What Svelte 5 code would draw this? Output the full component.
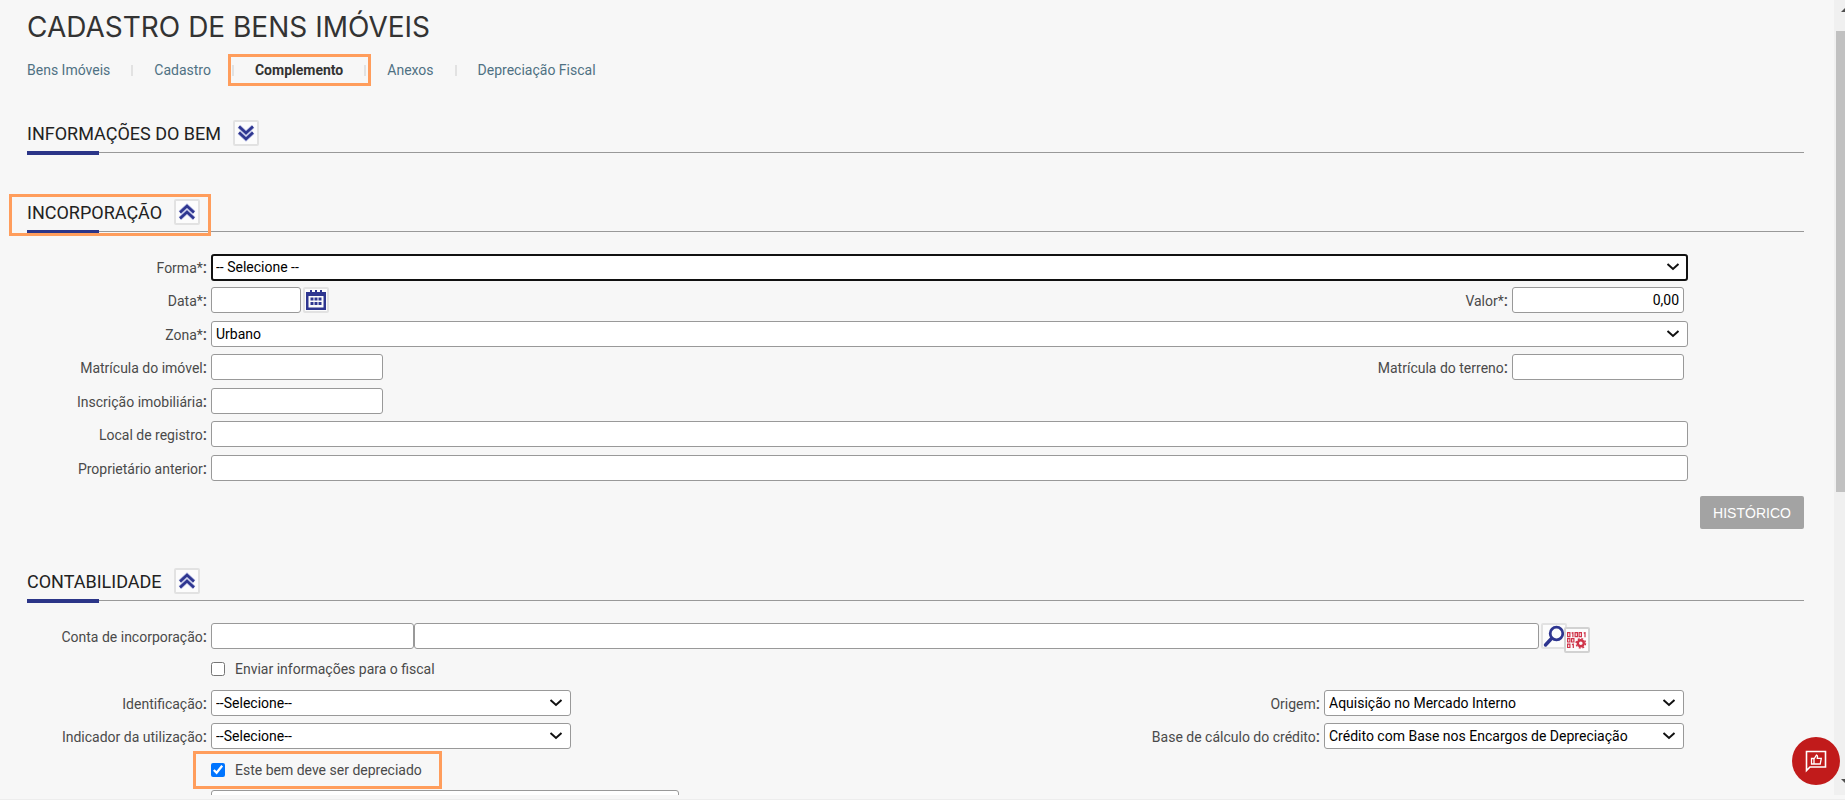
<script>
    const tabs = ["Bens Imóveis", "Cadastro", "Complemento", "Anexos", "Depreciação Fiscal"];
    const activeTab = "Complemento";

    let enviarFiscal = false;
    let depreciar = true;
    let valor = "0,00";
</script>

{#snippet chevrons(up)}
    <svg viewBox="0 0 24 24" width="24" height="24" class:up aria-hidden="true">
        <path d="M5 5.500 L12 12 L19 5.500 M5 11.500 L12 18 L19 11.500" fill="none" stroke="#b4b9e2" stroke-width="4.200" />
        <path d="M5 5.500 L12 12 L19 5.500 M5 11.500 L12 18 L19 11.500" fill="none" stroke="#2e3690" stroke-width="2.500" />
    </svg>
{/snippet}

{#snippet heading(title, up)}
    <div class="heading">
        <h2>{title}</h2>
        <button class="icon" aria-label={up ? "Recolher" : "Expandir"}>{@render chevrons(up)}</button>
    </div>
{/snippet}

{#snippet label(id, text)}
    <label class="label" for={id}>{text}<b>:</b></label>
{/snippet}

<div class="page">
    <div class="body">
        <main>
            <h1>CADASTRO DE BENS IMÓVEIS</h1>
            <nav>
                {#each tabs as tab}
                    <a href="#{tab}" class:active={tab === activeTab}>{tab}</a>
                {/each}
            </nav>

            <section class="first">
                {@render heading("INFORMAÇÕES DO BEM", false)}
            </section>

            <section class="second">
                <div class="marked">
                    {@render heading("INCORPORAÇÃO", true)}
                    <span class="mark"></span>
                </div>
                <div class="form">
                    <div class="row">
                        {@render label("forma", "Forma*")}
                        <select id="forma" class="wide focused"><option>-- Selecione --</option></select>
                    </div>
                    <div class="row">
                        {@render label("data", "Data*")}
                        <input id="data" class="date" type="text" />
                        <button class="icon" aria-label="Calendário">
                            <svg viewBox="0 0 24 24" width="24" height="24" fill="#2e3690">
                                <path d="M6 2h2v3H6z M11 2h2v3h-2z M16 2h2v3h-2z" />
                                <path d="M2 4h20v18H2z M4.500 8h15v11.500h-15z" fill-rule="evenodd" />
                                <path d="M6.500 9.500h3v3h-3z M10.500 9.500h3v3h-3z M14.500 9.500h3v3h-3z M6.500 14h3v3h-3z M10.500 14h3v3h-3z M14.500 14h3v3h-3z" />
                            </svg>
                        </button>
                        <div class="right">
                            {@render label("valor", "Valor*")}
                            <input id="valor" class="short number" type="text" bind:value={valor} />
                        </div>
                    </div>
                    <div class="row">
                        {@render label("zona", "Zona*")}
                        <select id="zona" class="wide"><option>Urbano</option></select>
                    </div>
                    <div class="row">
                        {@render label("matricula", "Matrícula do imóvel")}
                        <input id="matricula" class="short" type="text" />
                        <div class="right">
                            {@render label("terreno", "Matrícula do terreno")}
                            <input id="terreno" class="short" type="text" />
                        </div>
                    </div>
                    <div class="row">
                        {@render label("inscricao", "Inscrição imobiliária")}
                        <input id="inscricao" class="short" type="text" />
                    </div>
                    <div class="row">
                        {@render label("local", "Local de registro")}
                        <input id="local" class="wide" type="text" />
                    </div>
                    <div class="row">
                        {@render label("proprietario", "Proprietário anterior")}
                        <input id="proprietario" class="wide" type="text" />
                    </div>
                </div>
                <div class="actions">
                    <button class="history">HISTÓRICO</button>
                </div>
            </section>

            <section class="third">
                {@render heading("CONTABILIDADE", true)}
                <div class="form">
                    <div class="row">
                        {@render label("conta", "Conta de incorporação")}
                        <input id="conta" class="code" type="text" />
                        <input class="account" type="text" aria-label="Descrição da conta" />
                        <div class="tools">
                            <button class="icon" aria-label="Pesquisar">
                                <svg viewBox="0 0 24 24" width="24" height="24">
                                    <circle cx="14.500" cy="9.500" r="6.300" fill="none" stroke="#2e3690" stroke-width="2.800" />
                                    <path d="M9.500 14.500 L3.500 21" stroke="#2e3690" stroke-width="3.400" stroke-linecap="round" />
                                </svg>
                            </button>
                            <button class="icon code-icon" aria-label="Configurar código">
                                <svg viewBox="0 0 24 24" width="24" height="24" fill="none" stroke="#cf3348" stroke-width="1.200">
                                    <path d="M2.600 4.600h2.300v4h-2.300z M7.900 4v5.200 M6.600 5.200l1.300-.8 M10.100 4.600h2.300v4h-2.300z M14.100 4.600h2.300v4h-2.300z M20 4v5.200 M18.700 5.200l1.300-.8" />
                                    <path d="M2.600 10.700h2.300v3.300h-2.300z M6.600 10.700h2.300v3.300h-2.300z M2.600 16.200h2.300v3.300h-2.300z M8.300 15.600v4.500 M7 16.700l1.300-.8" />
                                    <circle cx="15.800" cy="15.300" r="3" stroke-width="2.400" />
                                    <circle cx="15.800" cy="15.300" r="4.700" stroke-width="1.400" stroke-dasharray="1.900 1.790" />
                                </svg>
                            </button>
                        </div>
                    </div>
                    <div class="row check">
                        <input id="fiscal" type="checkbox" bind:checked={enviarFiscal} />
                        <label for="fiscal">Enviar informações para o fiscal</label>
                    </div>
                    <div class="row">
                        {@render label("identificacao", "Identificação")}
                        <select id="identificacao" class="medium"><option>--Selecione--</option></select>
                        <div class="right">
                            {@render label("origem", "Origem")}
                            <select id="origem" class="medium"><option>Aquisição no Mercado Interno</option></select>
                        </div>
                    </div>
                    <div class="row">
                        {@render label("indicador", "Indicador da utilização")}
                        <select id="indicador" class="medium"><option>--Selecione--</option></select>
                        <div class="right">
                            {@render label("base", "Base de cálculo do crédito")}
                            <select id="base" class="medium"><option>Crédito com Base nos Encargos de Depreciação</option></select>
                        </div>
                    </div>
                    <div class="row check">
                        <div class="marked">
                            <input id="depreciado" type="checkbox" bind:checked={depreciar} />
                            <label for="depreciado">Este bem deve ser depreciado</label>
                            <span class="mark"></span>
                        </div>
                    </div>
                    <div class="row check">
                        <select class="next" aria-label="Tipo de depreciação"><option></option></select>
                    </div>
                </div>
            </section>
        </main>

        <div class="scrollbar" aria-hidden="true">
            <i class="arrow"></i>
            <i class="thumb"></i>
            <i class="arrow down"></i>
        </div>
    </div>
    <footer></footer>

    <button class="feedback" aria-label="Enviar feedback">
        <svg viewBox="0 0 24 24" width="24" height="24" fill="none" stroke="#fff">
            <path d="M2.500 21.500V2.500h19v15.500H6z" stroke-width="1.600" />
            <path d="M7.500 9.500h2.500v5.500H7.500z M10 10l2.500-4q1.500 0.500 .8 3.300h4l-1.100 5.700H10" stroke-width="1.300" />
        </svg>
    </button>
</div>

<style>
    :global(body) {
        margin: 0;
        background: #f7f7f7;
        font-family: Roboto, Arial, sans-serif;
        font-size: 14px;
        color: #4a4a4a;
    }

    .page {
        display: flex;
        flex-direction: column;
        height: 100vh;
        overflow: hidden;
        box-sizing: border-box;
        background: #f7f7f7;
    }

    .body {
        display: flex;
        flex: 1;
        min-height: 0;
    }

    footer {
        height: 4px;
        flex: none;
        border-bottom: 1px solid #ededed;
    }

    main {
        flex: 1;
        min-width: 0;
        overflow: hidden;
        padding: 0 30px 0 27px;
    }

    h1 {
        margin: 10px 0 0;
        font-family: Inter, sans-serif;
        font-size: 28px;
        font-weight: 400;
        line-height: 34px;
        color: #333;
    }

    nav {
        display: flex;
        align-items: center;
        margin-top: 10px;
        height: 32px;
    }

    nav a {
        position: relative;
        display: flex;
        align-items: center;
        color: #4f7183;
        text-decoration: none;
        line-height: 18px;
    }

    nav a + a::before {
        content: "";
        width: 2px;
        height: 11px;
        margin: 0 21px;
        background: #e2e2e2;
    }

    nav a.active {
        color: #333;
        font-weight: 700;
    }

    nav a.active::after {
        content: "";
        position: absolute;
        inset: -7px -28px -7px 17px;
        border: 3px solid #ff9d5c;
    }

    .first {
        margin-top: 34px;
    }

    .second {
        margin-top: 46px;
    }

    .third {
        margin-top: 39px;
    }

    .heading {
        display: flex;
        align-items: center;
        gap: 12px;
        height: 26px;
        padding-bottom: 6px;
        border-bottom: 1px solid #999;
    }

    .heading::after {
        content: "";
        position: absolute;
        width: 72px;
        height: 4px;
        margin-top: 40px;
        background: #2b3588;
    }

    h2 {
        margin: 0;
        padding-top: 2px;
        font-size: 18px;
        font-weight: 400;
        line-height: 26px;
        color: #222;
    }

    .icon {
        display: flex;
        flex: none;
        align-items: center;
        justify-content: center;
        width: 26px;
        height: 26px;
        padding: 0;
        border: 2px solid #e2e2e2;
        border-radius: 2px;
        background: #fcfcfc;
        box-sizing: border-box;
    }

    .icon svg {
        flex: none;
    }

    .up {
        transform: rotate(180deg);
    }

    .marked {
        position: relative;
    }

    .mark {
        position: absolute;
        inset: -5px auto -4px -18px;
        width: 202px;
        border: 3px solid #ff9d5c;
        box-sizing: border-box;
        pointer-events: none;
    }

    .check .mark {
        inset: -6px auto -6px -18px;
        width: 249px;
    }

    .form {
        padding: 18px 116px 0 0;
    }

    .row {
        display: flex;
        align-items: center;
        height: 26px;
        padding: 4px 0;
    }

    .row:nth-child(even) {
        padding-top: 3px;
    }

    .label {
        flex: none;
        width: 180px;
        padding-top: 2px;
        padding-right: 4px;
        text-align: right;
        line-height: 24px;
    }

    .label b {
        font-size: 16px;
        font-weight: 500;
        line-height: 16px;
    }

    input[type="text"],
    select {
        height: 26px;
        margin: 0;
        padding: 0 4px;
        border: 1px solid #999;
        border-radius: 3px;
        background: #fff;
        box-sizing: border-box;
        color: #000;
        font: inherit;
    }

    select {
        appearance: none;
        background: #fff url("data:image/svg+xml,%3Csvg xmlns='http://www.w3.org/2000/svg' width='14' height='10'%3E%3Cpath d='M1.500 2l5.500 5 5.500-5' fill='none' stroke='%23111' stroke-width='2'/%3E%3C/svg%3E") no-repeat right 7px center;
    }

    .wide {
        flex: 1;
        min-width: 0;
    }

    select.focused {
        height: 27px;
        padding: 0 3px;
        border: 2px solid #111;
        background-position: right 6px center;
    }

    .date {
        width: 90px;
    }

    .date + .icon {
        margin-left: 2px;
    }

    .short {
        width: 172px;
    }

    .number {
        text-align: right;
    }

    .medium {
        width: 360px;
    }

    .right {
        display: flex;
        align-items: center;
        margin-left: auto;
        padding-right: 4px;
    }

    .actions {
        display: flex;
        justify-content: flex-end;
        margin-top: 11px;
    }

    .history {
        width: 104px;
        height: 33px;
        padding: 0;
        border: 0;
        border-radius: 2px;
        background: #a3a3a3;
        color: #fff;
        font-family: "Liberation Sans", Arial, sans-serif;
        font-size: 14px;
    }

    .code {
        width: 203px;
    }

    .account {
        flex: 1;
        min-width: 0;
    }

    .tools {
        display: flex;
        width: 149px;
        padding-left: 2px;
        box-sizing: border-box;
    }

    /* the second tool overlaps the first one */
    .code-icon {
        margin: 4px 0 -4px -3px;
        border-color: #d2d2d2;
    }

    .check {
        padding-left: 184px;
    }

    .check,
    .check .marked {
        display: flex;
        align-items: center;
    }

    .check .marked {
        height: 26px;
    }

    input[type="checkbox"] {
        width: 14px;
        height: 14px;
        margin: 0 10px 0 0;
        accent-color: #0075ff;
    }

    .next {
        width: 468px;
    }

    .scrollbar {
        display: flex;
        flex-direction: column;
        align-items: flex-end;
        flex: none;
        width: 11px;
        overflow: hidden;
        background: #f0f0f0;
    }

    .arrow {
        flex: none;
        width: 4px;
        height: 4px;
        margin: 8px 0 19px;
        background: #505050;
        clip-path: polygon(100% 0, 100% 100%, 0 100%);
    }

    .arrow.down {
        margin: auto 0 12px;
        clip-path: polygon(0 0, 100% 0, 100% 100%);
    }

    .thumb {
        width: 9px;
        height: 58%;
        background: #c1c1c1;
    }

    .feedback {
        position: fixed;
        right: 5px;
        bottom: 15px;
        display: flex;
        align-items: center;
        justify-content: center;
        width: 48px;
        height: 48px;
        padding: 0;
        border: 0;
        border-radius: 50%;
        background: #c11b1b;
    }
</style>
